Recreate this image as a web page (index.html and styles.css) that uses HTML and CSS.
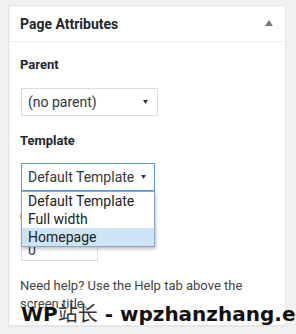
FILE: index.html
```html
<!DOCTYPE html>
<html lang="en">
<head>
  <meta charset="UTF-8">
  <meta name="viewport" content="width=device-width, initial-scale=1.0">
  <title>Page Attributes</title>
  <link rel="stylesheet" href="styles.css">
</head>
<body>
  <div class="postbox">
    <div class="postbox-header">
      <h2>Page Attributes</h2>
      <svg class="toggle" width="8" height="6" viewBox="0 0 8 6" aria-hidden="true">
        <polygon points="4,0 8,6 0,6" fill="#72777c"/>
      </svg>
    </div>

    <div class="inside">
      <p class="attr-label parent-label">Parent</p>
      <div class="select parent-select">
        <span>(no parent)</span>
        <svg class="caret" width="5" height="4" viewBox="0 0 5 4"><polygon points="0,0 5,0 2.5,4" fill="#32373c"/></svg>
      </div>

      <p class="attr-label template-label">Template</p>
      <div class="select-wrap">
        <div class="select template-select is-open">
          <span>Default Template</span>
          <svg class="caret" width="5" height="4" viewBox="0 0 5 4"><polygon points="0,0 5,0 2.5,4" fill="#32373c"/></svg>
        </div>
        <!-- open option list drawn over the fields below -->
        <ul class="dropdown">
          <li>Default Template</li>
          <li>Full width</li>
          <li class="selected">Homepage</li>
        </ul>
      </div>

      <p class="attr-label order-label">Order</p>
      <div class="number-input">0</div>

      <p class="help">Need help? Use the Help tab above the screen title.</p>
    </div>
  </div>

  <div class="watermark">WP<span class="cjk">站长</span> - wpzhanzhang.eeeey.com</div>
</body>
</html>
```

FILE: styles.css
```css
html,
body {
  overflow: hidden;
}

body {
  margin: 0;
  padding-top: 5px;
  background-color: #f1f1f1;
  font-family: Roboto, "Liberation Sans", sans-serif;
  color: #444;
  position: relative;
  height: 329px;
}

.postbox {
  margin-left: 8px;
  width: 278px;
  box-sizing: border-box;
  background-color: #fff;
  border: 1px solid #e5e5e5;
  box-shadow: 0 1px 1px rgba(0, 0, 0, 0.04);
}

.postbox-header {
  height: 35px;
  display: flex;
  align-items: center;
  justify-content: space-between;
  padding: 0 12px 0 11px;
  border-bottom: 1px solid #eee;
}

.postbox-header h2 {
  margin: 0;
  font-size: 14px;
  font-weight: bold;
  color: #23282d;
}

.toggle {
  display: block;
  margin-top: -1px;
}

.inside {
  padding: 0 12px 12px 11px;
}

.attr-label {
  margin: 0;
  font-size: 13px;
  line-height: 18px;
  font-weight: bold;
  color: #23282d;
}

.parent-label {
  margin-top: 14px;
}

.template-label {
  margin-top: 16px;
}

.order-label {
  margin-top: 17px;
}

.select {
  box-sizing: border-box;
  height: 28px;
  margin-left: 1px;
  display: flex;
  align-items: center;
  justify-content: space-between;
  padding: 0 9px 0 6px;
  border: 1px solid #ddd;
  font-size: 14px;
  color: #32373c;
  background-color: #fff;
}

.parent-select {
  width: 137px;
  margin-top: 14px;
}

.select-wrap {
  position: relative;
  margin-top: 13px;
}

.template-select {
  width: 134px;
  padding-right: 8px;
}

.select.is-open {
  border-color: #5b9dd9;
}

.caret {
  display: block;
}

.dropdown {
  position: absolute;
  top: 28px;
  left: 1px;
  width: 134px;
  box-sizing: border-box;
  margin: 0;
  padding: 0;
  list-style: none;
  background-color: #fff;
  border: 1px solid #8ea6c9;
  box-shadow: 1px 2px 3px rgba(0, 0, 0, 0.25);
  z-index: 2;
}

.dropdown li {
  height: 18px;
  line-height: 18px;
  padding-left: 6px;
  font-size: 14px;
  color: #222;
}

.dropdown li.selected {
  background-color: #cde4f7;
}

.number-input {
  box-sizing: border-box;
  width: 77px;
  height: 22px;
  margin: 13px 0 0 1px;
  padding-left: 6px;
  border: 1px solid #ddd;
  font-size: 14px;
  line-height: 20px;
  color: #32373c;
}

.help {
  margin: 16px 0 0;
  max-width: 236px;
  font-size: 13px;
  line-height: 18px;
  color: #444;
}

.watermark {
  position: absolute;
  top: 303px;
  left: 21px;
  white-space: nowrap;
  font-family: "DejaVu Sans", sans-serif;
  font-weight: bold;
  font-size: 20px;
  line-height: 20px;
  color: #111;
}

.watermark .cjk {
  font-family: "Noto Sans CJK SC", sans-serif;
  font-weight: normal;
  color: #333;
}
```
